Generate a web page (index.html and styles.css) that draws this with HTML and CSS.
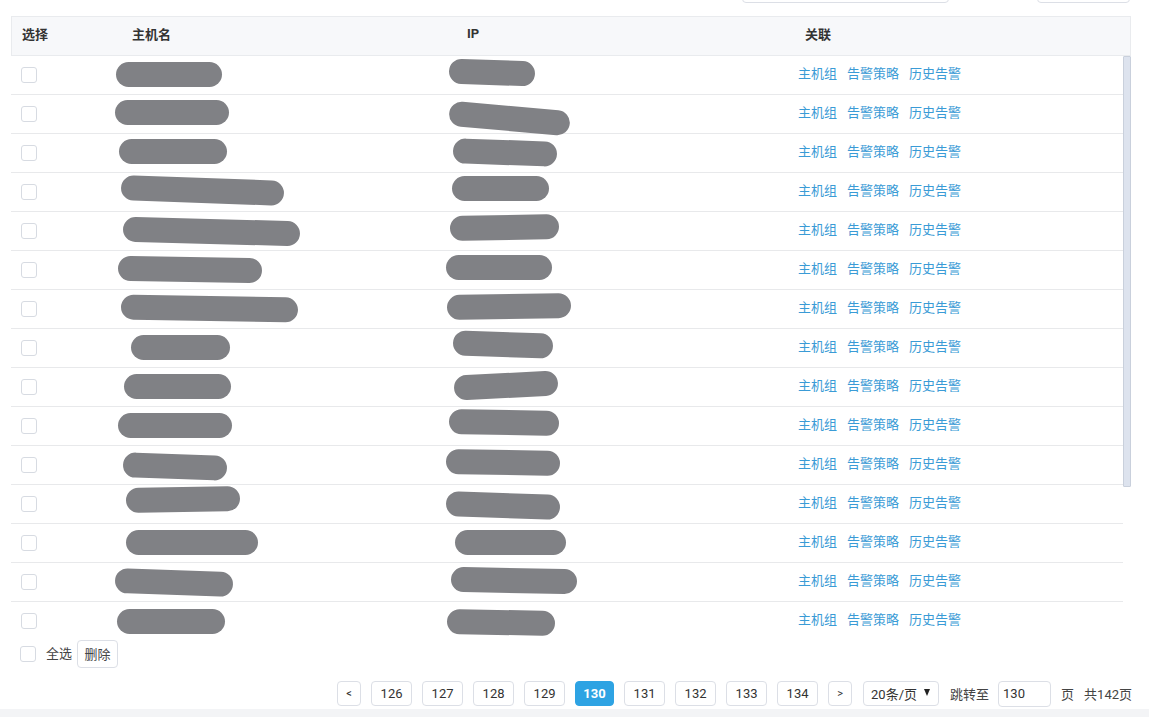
FILE: index.html
```html
<!DOCTYPE html>
<html lang="zh-CN">
<head>
<meta charset="utf-8">
<title>主机列表</title>
<link rel="stylesheet" href="styles.css">
</head>
<body>
<div class="page">
  <div class="toolbar">
    <span class="tb-box tb-search"></span>
    <span class="tb-box tb-btn"></span>
  </div>

  <div class="table">
    <div class="thead">
      <div class="cell">选择</div>
      <div class="cell">主机名</div>
      <div class="cell">IP</div>
      <div class="cell">关联</div>
    </div>
    <div class="tbody">
      <div class="rows">
      <div class="row"><div class="cell"><span class="cb"></span></div><div class="cell"><span class="blob" style="--x:-5px;--w:106px;--y:-1px"></span></div><div class="cell"><span class="blob" style="--x:-7px;--w:86px;--y:-3px;--r:2deg"></span></div><div class="cell links"><a>主机组</a><a>告警策略</a><a>历史告警</a></div></div>
      <div class="row"><div class="cell"><span class="cb"></span></div><div class="cell"><span class="blob" style="--x:-6px;--w:114px;--y:-2px"></span></div><div class="cell"><span class="blob" style="--x:-7px;--w:121px;--y:4px;--r:5deg"></span></div><div class="cell links"><a>主机组</a><a>告警策略</a><a>历史告警</a></div></div>
      <div class="row"><div class="cell"><span class="cb"></span></div><div class="cell"><span class="blob" style="--x:-2px;--w:108px;--y:-2px"></span></div><div class="cell"><span class="blob" style="--x:-3px;--w:104px;--y:-1px;--r:2deg"></span></div><div class="cell links"><a>主机组</a><a>告警策略</a><a>历史告警</a></div></div>
      <div class="row"><div class="cell"><span class="cb"></span></div><div class="cell"><span class="blob" style="--x:0px;--w:163px;--y:-2px;--r:2deg"></span></div><div class="cell"><span class="blob" style="--x:-4px;--w:97px;--y:-4px"></span></div><div class="cell links"><a>主机组</a><a>告警策略</a><a>历史告警</a></div></div>
      <div class="row"><div class="cell"><span class="cb"></span></div><div class="cell"><span class="blob" style="--x:2px;--w:177px;--y:0px;--r:1.5deg"></span></div><div class="cell"><span class="blob" style="--x:-6px;--w:109px;--y:-4px;--r:-1deg"></span></div><div class="cell links"><a>主机组</a><a>告警策略</a><a>历史告警</a></div></div>
      <div class="row"><div class="cell"><span class="cb"></span></div><div class="cell"><span class="blob" style="--x:-3px;--w:144px;--y:-1px;--r:1deg"></span></div><div class="cell"><span class="blob" style="--x:-10px;--w:106px;--y:-3px"></span></div><div class="cell links"><a>主机组</a><a>告警策略</a><a>历史告警</a></div></div>
      <div class="row"><div class="cell"><span class="cb"></span></div><div class="cell"><span class="blob" style="--x:0px;--w:177px;--y:-1px;--r:1deg"></span></div><div class="cell"><span class="blob" style="--x:-9px;--w:124px;--y:-3px;--r:-1deg"></span></div><div class="cell links"><a>主机组</a><a>告警策略</a><a>历史告警</a></div></div>
      <div class="row"><div class="cell"><span class="cb"></span></div><div class="cell"><span class="blob" style="--x:10px;--w:99px;--y:-1px"></span></div><div class="cell"><span class="blob" style="--x:-3px;--w:100px;--y:-4px;--r:2deg"></span></div><div class="cell links"><a>主机组</a><a>告警策略</a><a>历史告警</a></div></div>
      <div class="row"><div class="cell"><span class="cb"></span></div><div class="cell"><span class="blob" style="--x:3px;--w:107px;--y:-1px"></span></div><div class="cell"><span class="blob" style="--x:-2px;--w:104px;--y:-2px;--r:-3deg"></span></div><div class="cell links"><a>主机组</a><a>告警策略</a><a>历史告警</a></div></div>
      <div class="row"><div class="cell"><span class="cb"></span></div><div class="cell"><span class="blob" style="--x:-3px;--w:114px;--y:-1px"></span></div><div class="cell"><span class="blob" style="--x:-7px;--w:110px;--y:-4px;--r:1deg"></span></div><div class="cell links"><a>主机组</a><a>告警策略</a><a>历史告警</a></div></div>
      <div class="row"><div class="cell"><span class="cb"></span></div><div class="cell"><span class="blob" style="--x:2px;--w:104px;--y:1px;--r:2deg"></span></div><div class="cell"><span class="blob" style="--x:-10px;--w:114px;--y:-3px;--r:1deg"></span></div><div class="cell links"><a>主机组</a><a>告警策略</a><a>历史告警</a></div></div>
      <div class="row"><div class="cell"><span class="cb"></span></div><div class="cell"><span class="blob" style="--x:5px;--w:114px;--y:-5px;--r:-1deg"></span></div><div class="cell"><span class="blob" style="--x:-10px;--w:114px;--y:1px;--r:2deg"></span></div><div class="cell links"><a>主机组</a><a>告警策略</a><a>历史告警</a></div></div>
      <div class="row"><div class="cell"><span class="cb"></span></div><div class="cell"><span class="blob" style="--x:5px;--w:132px;--y:-1px"></span></div><div class="cell"><span class="blob" style="--x:-1px;--w:111px;--y:-1px"></span></div><div class="cell links"><a>主机组</a><a>告警策略</a><a>历史告警</a></div></div>
      <div class="row"><div class="cell"><span class="cb"></span></div><div class="cell"><span class="blob" style="--x:-6px;--w:118px;--y:0px;--r:2deg"></span></div><div class="cell"><span class="blob" style="--x:-5px;--w:126px;--y:-2px;--r:1deg"></span></div><div class="cell links"><a>主机组</a><a>告警策略</a><a>历史告警</a></div></div>
      <div class="row"><div class="cell"><span class="cb"></span></div><div class="cell"><span class="blob" style="--x:-4px;--w:108px;--y:0px"></span></div><div class="cell"><span class="blob" style="--x:-9px;--w:108px;--y:1px;--r:1deg"></span></div><div class="cell links"><a>主机组</a><a>告警策略</a><a>历史告警</a></div></div>
      </div>
      <div class="vscroll"><span class="thumb"></span></div>
    </div>
  </div>

  <div class="bulk">
    <span class="cb"></span>
    <span class="bulk-label">全选</span>
    <button class="btn">删除</button>
  </div>

  <div class="pager">
    <span class="pg arrow">&lt;</span>
    <span class="pg">126</span>
    <span class="pg">127</span>
    <span class="pg">128</span>
    <span class="pg">129</span>
    <span class="pg active">130</span>
    <span class="pg">131</span>
    <span class="pg">132</span>
    <span class="pg">133</span>
    <span class="pg">134</span>
    <span class="pg arrow">&gt;</span>
    <span class="pg-select">20条/页<span class="caret"></span></span>
    <span class="pg-text">跳转至</span>
    <span class="pg-input">130</span>
    <span class="pg-text">页</span>
    <span class="pg-text">共142页</span>
  </div>

  <div class="band"></div>
</div>
</body>
</html>
```

FILE: styles.css
```css
* { box-sizing: border-box; }

html, body {
  margin: 0;
  padding: 0;
  background: #ffffff;
}

body {
  font-family: Roboto, "Noto Sans CJK SC", sans-serif;
  font-size: 13px;
  color: #333333;
  width: 1149px;
  height: 717px;
  overflow: hidden;
}

.page {
  display: flex;
  flex-direction: column;
  height: 717px;
}

/* top toolbar, mostly scrolled off */
.toolbar {
  height: 3px;
  overflow: hidden;
  display: flex;
  align-items: flex-end;
}
.tb-box {
  display: block;
  height: 30px;
  border: 1px solid #dcdfe6;
  border-radius: 4px;
  flex: none;
}
.tb-search { margin-left: 742px; width: 207px; }
.tb-btn { margin-left: 88px; width: 93px; }

/* table */
.table {
  margin: 13px 0 0 11px;
  width: 1120px;
}
.thead,
.row {
  display: grid;
  grid-template-columns: 110px 335px 337px 1fr;
  align-items: center;
}
.thead {
  height: 40px;
  background: #f7f8fa;
  border: 1px solid #e9ebee;
  font-weight: bold;
  color: #333333;
}
.thead .cell { padding: 0 0 5px 10px; }
.thead .cell:nth-child(4) { padding-left: 11px; }

.tbody {
  height: 584px;
  display: flex;
}
.rows {
  flex: 1;
  min-width: 0;
  overflow: hidden;
}
.vscroll {
  width: 8px;
  flex: none;
}
.thumb {
  display: block;
  height: 431px;
  background: #dde3ee;
  border: 1px solid #c9d0dc;
  border-radius: 1px;
}

.row {
  height: 39px;
  border-bottom: 1px solid #e8e9eb;
}
.cell {
  display: flex;
  align-items: center;
  height: 100%;
  min-width: 0;
}
.row .cell:first-child { padding: 0 0 1px 10px; }

.cb {
  display: inline-block;
  width: 16px;
  height: 16px;
  border: 1px solid #d7dbe2;
  border-radius: 3px;
  background: #ffffff;
  flex: none;
}

.blob {
  display: block;
  height: 25px;
  width: var(--w, 100px);
  margin-left: var(--x, 0px);
  border-radius: 13px;
  background: #808185;
  transform: translateY(var(--y, 0px)) rotate(var(--r, 0deg));
  flex: none;
}

.links { padding: 0 0 5px 5px; gap: 10px; }
.links a {
  color: #3a9bd6;
  text-decoration: none;
  cursor: pointer;
}

/* bulk actions */
.bulk {
  height: 28px;
  display: flex;
  align-items: center;
  padding-left: 20px;
}
.bulk-label { margin: 0 0 4px 10px; color: #444444; }
.btn {
  margin-left: 5px;
  height: 28px;
  width: 41px;
  padding: 0 0 2px;
  border: 1px solid #dcdfe6;
  border-radius: 4px;
  background: #ffffff;
  font: inherit;
  color: #444444;
}

/* pager */
.pager {
  margin-top: 13px;
  height: 25px;
  display: flex;
  align-items: center;
  justify-content: flex-end;
  padding-right: 17px;
  gap: 10px;
}
.pager > * { flex: none; }
.pg {
  height: 25px;
  width: 41px;
  border: 1px solid #dcdfe6;
  border-radius: 4px;
  display: flex;
  align-items: center;
  justify-content: center;
  color: #333333;
  font-size: 13px;
}
.pg.arrow { width: 24px; font-size: 11px; }
.pg.active {
  width: 39px;
  background: #2ea3e3;
  border-color: #2ea3e3;
  color: #ffffff;
  font-weight: bold;
}
.pg.arrow + .pg-select { margin-left: 1px; }
.pg-select {
  height: 25px;
  width: 76px;
  border: 1px solid #dcdfe6;
  border-radius: 4px;
  display: flex;
  align-items: center;
  justify-content: space-between;
  padding: 0 8px 0 7px;
  color: #333333;
}
.caret {
  width: 0;
  height: 0;
  border-left: 3.5px solid transparent;
  border-right: 3.5px solid transparent;
  border-top: 7px solid #222222;
  margin-top: -2px;
}
.pg-text { color: #444444; }
.pg-select + .pg-text { margin-left: 1px; }
.pg-input {
  height: 26px;
  width: 53px;
  margin-left: -1px;
  border: 1px solid #dcdfe6;
  border-radius: 4px;
  display: flex;
  align-items: center;
  padding-left: 4px;
  color: #333333;
}

.band {
  margin-top: 3px;
  flex: 1;
  background: #f3f4f6;
}
```
